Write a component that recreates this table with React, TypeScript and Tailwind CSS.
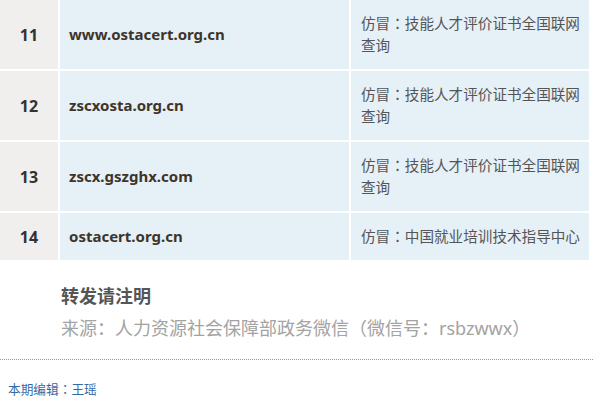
import React from "react";

const rows = [
  { n: "11", url: "www.ostacert.org.cn", desc: "技能人才评价证书全国联网查询" },
  { n: "12", url: "zscxosta.org.cn", desc: "技能人才评价证书全国联网查询" },
  { n: "13", url: "zscx.gszghx.com", desc: "技能人才评价证书全国联网查询" },
  { n: "14", url: "ostacert.org.cn", desc: "中国就业培训技术指导中心" },
];

const cjk = "font-['Noto_Sans','Noto_Sans_CJK_SC',sans-serif]";
const colon = "font-['Noto_Sans_CJK_TC',sans-serif]";

export default function App() {
  return (
    <div className={`w-[593px] h-[404px] bg-white overflow-hidden ${cjk}`}>
      <div className="flex w-[589px] flex-col gap-[2px]">
        {rows.map((r) => (
          <div key={r.n} className="flex gap-[2px]">
            <div className="flex w-[58px] shrink-0 items-center justify-center bg-[#f0efee] text-[16px] font-bold text-[#333]">
              {r.n}
            </div>
            <div className="flex w-[289px] shrink-0 items-center bg-[#e6f0f7] pl-[9px] text-[15px] font-bold text-[#3f3429]">
              {r.url}
            </div>
            <div className="flex-1 bg-[#e6f0f7] pl-[10px] pr-[8px] pt-[12px] pb-[13px] text-[14.6px] leading-[22px] text-[#555]">
              仿冒<span className={colon}>：</span>
              {r.desc}
            </div>
          </div>
        ))}
      </div>
      <div className="pl-[61px] pt-[25px]">
        <div className="text-[18px] font-bold leading-[22px] text-[#555]">转发请注明</div>
        <div className="mt-[9px] text-[18px] leading-[24px] text-[#a3a3a3]">
          来源：人力资源社会保障部政务微信（微信号：rsbzwwx）
        </div>
      </div>
      <div className="mt-[19px] border-t border-dotted border-[#999]" />
      <div className="pl-[8px] pt-[20px] text-[12.7px] leading-[18px] text-[#336ba6]">
        本期编辑<span className={colon}>：</span>王瑶
      </div>
    </div>
  );
}
